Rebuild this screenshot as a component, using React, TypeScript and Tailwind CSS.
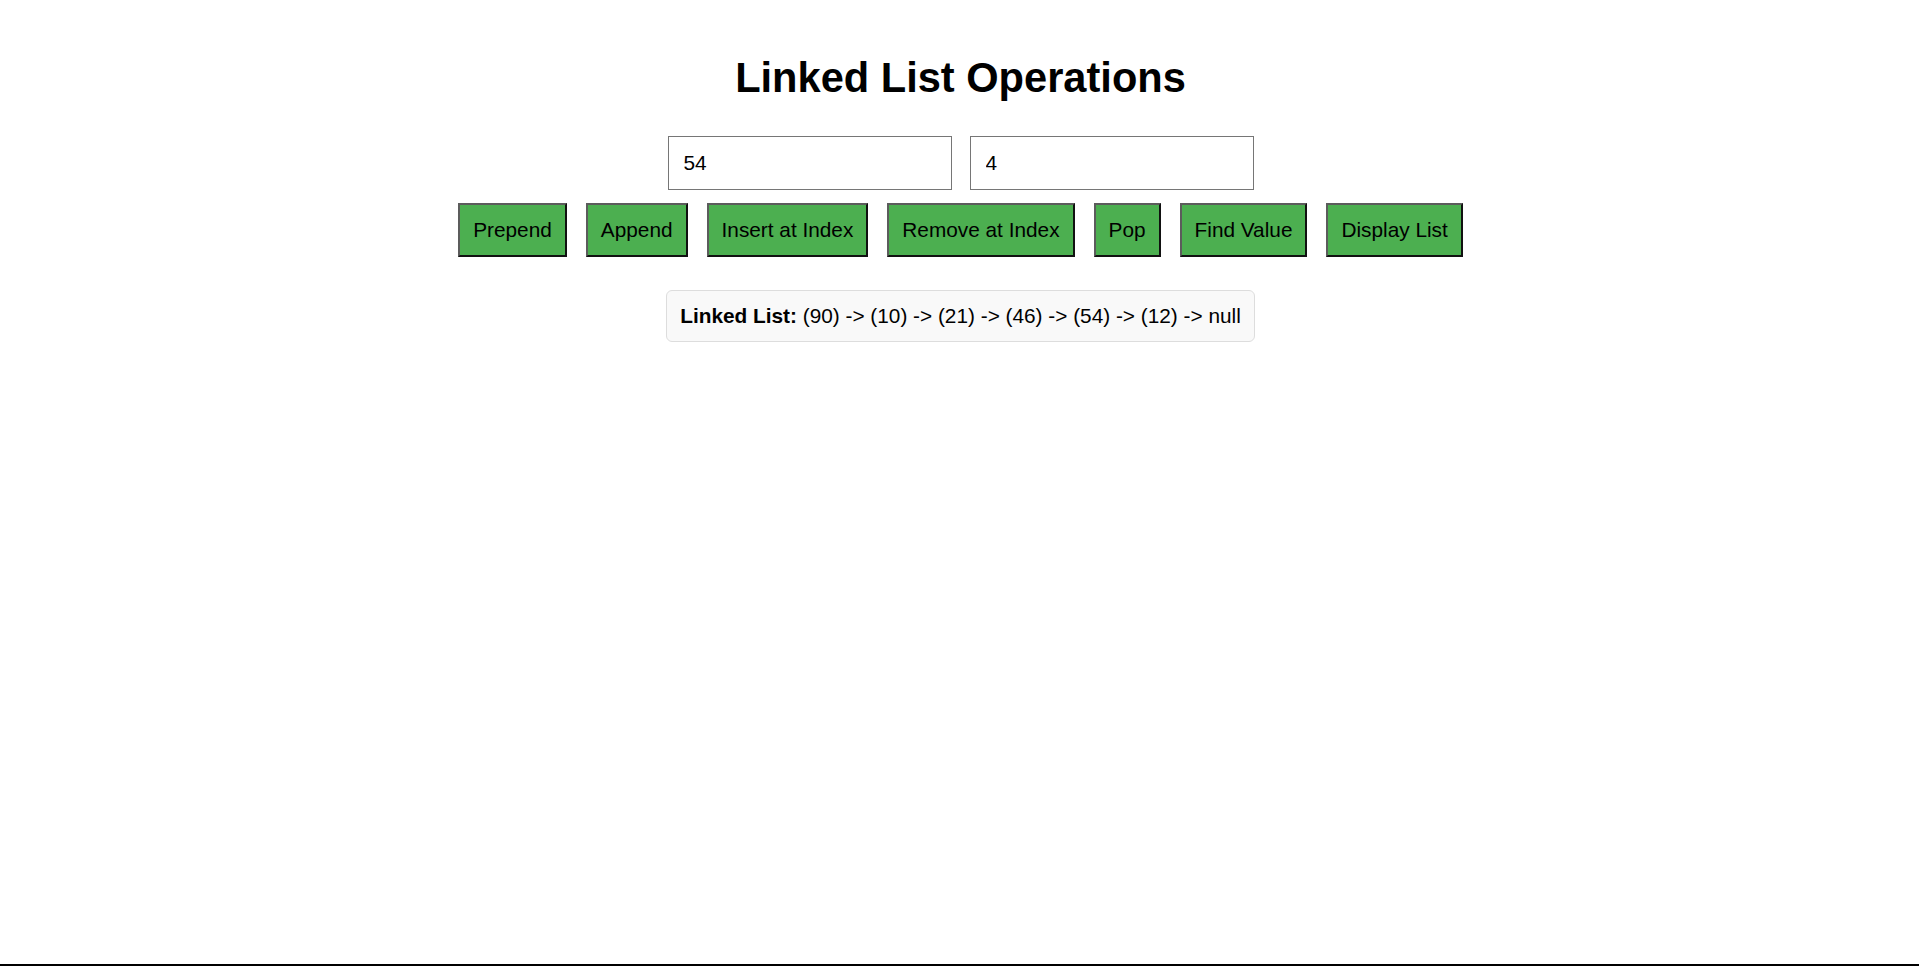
import { useState } from "react";

type Node = { value: number };

const buttonLabels = [
  "Prepend",
  "Append",
  "Insert at Index",
  "Remove at Index",
  "Pop",
  "Find Value",
  "Display List",
];

export default function App() {
  const [value, setValue] = useState("54");
  const [index, setIndex] = useState("4");
  const [nodes] = useState<Node[]>([
    { value: 90 },
    { value: 10 },
    { value: 21 },
    { value: 46 },
    { value: 54 },
    { value: 12 },
  ]);

  const listText =
    nodes.map((node) => `(${node.value})`).join(" -> ") + " -> null";

  return (
    <div
      className="min-h-[966px] box-border border-b-2 border-black bg-white pl-[2px] pt-[27px] text-center text-black"
      style={{ fontFamily: '"Liberation Sans", Arial, sans-serif' }}
    >
      <h1 className="my-[28px] text-[41.6px] font-bold leading-[46.5px]">
        Linked List Operations
      </h1>

      <div className="flex justify-center gap-[18px]">
        <input
          className="my-[6.5px] box-border h-[54px] w-[284px] border border-[#767676] px-[15px] text-[20.8px] text-black outline-none"
          value={value}
          onChange={(e) => setValue(e.target.value)}
        />
        <input
          className="my-[6.5px] box-border h-[54px] w-[284px] border border-[#767676] px-[15px] text-[20.8px] text-black outline-none"
          value={index}
          onChange={(e) => setIndex(e.target.value)}
        />
      </div>

      <div className="flex justify-center gap-[19px]">
        {buttonLabels.map((label) => (
          <button
            key={label}
            className="my-[6.5px] box-border h-[54px] border-2 border-t-[#5c5c5c] border-l-[#5c5c5c] border-b-[#111] border-r-[#111] bg-[#4CAF50] px-[13px] text-[20.8px] text-black"
          >
            {label}
          </button>
        ))}
      </div>

      <div className="mt-[26px] flex justify-center">
        <div className="box-border inline-block h-[52px] rounded-[6px] border border-[#dddddd] bg-[#f9f9f9] px-[13.5px] text-[20.8px] leading-[50px]">
          <strong>Linked List:</strong> {listText}
        </div>
      </div>
    </div>
  );
}
